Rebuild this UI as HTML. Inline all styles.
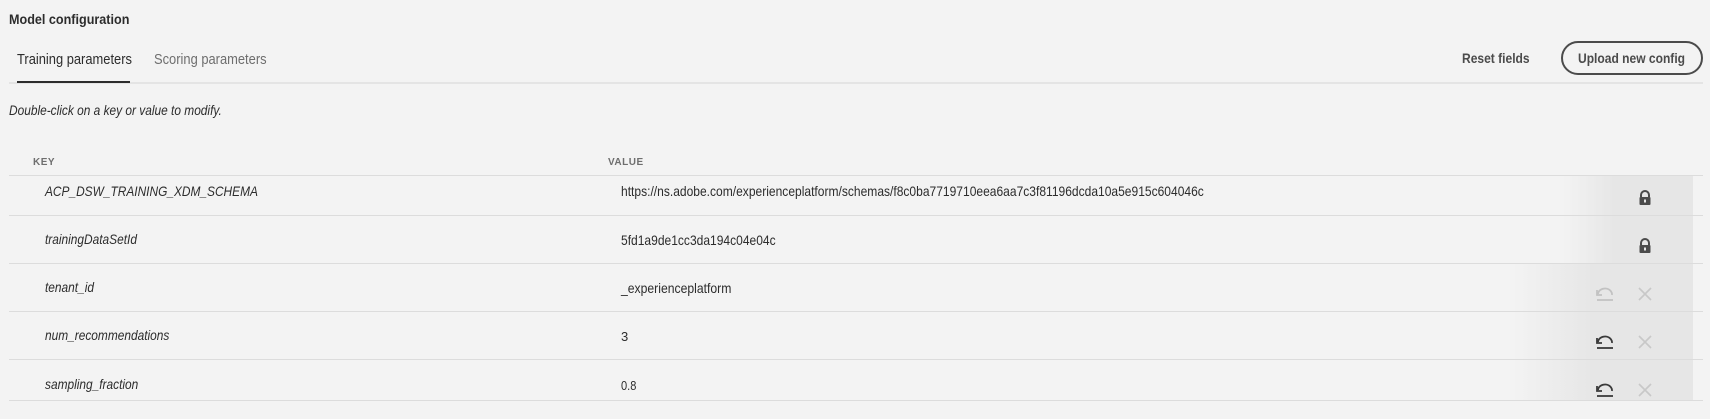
<!DOCTYPE html>
<html><head><style>
*{margin:0;padding:0;box-sizing:border-box}
body{width:1710px;height:419px;background:#f3f3f3;font-family:"Liberation Sans",sans-serif;color:#2c2c2c;position:relative;overflow:hidden}
.a{position:absolute;white-space:nowrap}
.sq{transform:scaleX(0.82);transform-origin:left center;display:inline-block}
.line{position:absolute;left:9px;width:1694px;height:1px;background:#dcdcdc}
.grad{position:absolute;right:17px;width:200px;background:linear-gradient(to right,rgba(230,230,230,0),#e6e6e6 35%)}
.key{position:absolute;left:45px;font-style:italic;font-size:14px;color:#2c2c2c}
.val{position:absolute;left:621px;font-size:14px;color:#2c2c2c}
</style></head><body>
<div class="a" style="left:9px;top:11px;font-size:14px;font-weight:bold"><span class="sq" style="transform:scaleX(0.9)">Model configuration</span></div>
<div class="a" style="left:17px;top:51px;font-size:15px"><span class="sq" style="transform:scaleX(0.86)">Training parameters</span></div>
<div class="a" style="left:154px;top:51px;font-size:15px;color:#6e6e6e"><span class="sq" style="transform:scaleX(0.86)">Scoring parameters</span></div>
<div class="a" style="left:9px;top:82px;width:1694px;height:2px;background:#e4e4e4"></div>
<div class="a" style="left:17px;top:81px;width:113px;height:2px;background:#2c2c2c"></div>
<div class="a" style="left:1462px;top:50px;font-size:14px;font-weight:bold;color:#4b4b4b"><span class="sq" style="transform:scaleX(0.86)">Reset fields</span></div>
<div class="a" style="left:1561px;top:41px;width:142px;height:34px;border:2px solid #4b4b4b;border-radius:17px;font-size:14px;font-weight:bold;color:#4b4b4b;padding:7px 0 0 15px"><span class="sq" style="transform:scaleX(0.86)">Upload new config</span></div>
<div class="a" style="left:9px;top:102px;font-size:14px;font-style:italic"><span class="sq" style="transform:scaleX(0.85)">Double-click on a key or value to modify.</span></div>
<div class="a" style="left:33px;top:157px;font-size:10px;font-weight:bold;color:#6e6e6e;letter-spacing:0.5px">KEY</div>
<div class="a" style="left:608px;top:157px;font-size:10px;font-weight:bold;color:#6e6e6e;letter-spacing:0.5px">VALUE</div>

<div class="grad" style="top:175px;height:88px;width:130px;background:linear-gradient(to right,rgba(230,230,230,0),#e6e6e6 40%)"></div>
<div class="grad" style="top:263px;height:137px;width:180px;background:linear-gradient(to right,rgba(230,230,230,0),#e6e6e6 45%)"></div>

<div class="line" style="top:175px"></div>
<div class="line" style="top:215px"></div>
<div class="line" style="top:263px"></div>
<div class="line" style="top:311px"></div>
<div class="line" style="top:359px"></div>
<div class="line" style="top:400px"></div>

<div class="key" style="top:183px"><span class="sq" style="transform:scaleX(0.85)">ACP_DSW_TRAINING_XDM_SCHEMA</span></div>
<div class="val" style="top:183px"><span class="sq" style="transform:scaleX(0.86)">https://ns.adobe.com/experienceplatform/schemas/f8c0ba7719710eea6aa7c3f81196dcda10a5e915c604046c</span></div>
<div class="key" style="top:231px"><span class="sq" style="transform:scaleX(0.85)">trainingDataSetId</span></div>
<div class="val" style="top:232px"><span class="sq" style="transform:scaleX(0.86)">5fd1a9de1cc3da194c04e04c</span></div>
<div class="key" style="top:279px"><span class="sq" style="transform:scaleX(0.85)">tenant_id</span></div>
<div class="val" style="top:280px"><span class="sq" style="transform:scaleX(0.87)">_experienceplatform</span></div>
<div class="key" style="top:327px"><span class="sq" style="transform:scaleX(0.85)">num_recommendations</span></div>
<div class="val" style="top:329px;font-size:13px">3</div>
<div class="key" style="top:376px"><span class="sq" style="transform:scaleX(0.85)">sampling_fraction</span></div>
<div class="val" style="top:378px;font-size:13px"><span class="sq" style="transform:scaleX(0.85)">0.8</span></div>

<svg class="a" style="left:1637px;top:190px" width="16" height="16" viewBox="0 0 16 16"><path d="M4 7V5a4 4 0 0 1 8 0v2" fill="none" stroke="#4b4b4b" stroke-width="2"/><rect x="2.5" y="7" width="11" height="8" rx="1" fill="#4b4b4b"/><rect x="7" y="9.5" width="2" height="3" fill="#e6e6e6"/></svg>
<svg class="a" style="left:1637px;top:238px" width="16" height="16" viewBox="0 0 16 16"><path d="M4 7V5a4 4 0 0 1 8 0v2" fill="none" stroke="#4b4b4b" stroke-width="2"/><rect x="2.5" y="7" width="11" height="8" rx="1" fill="#4b4b4b"/><rect x="7" y="9.5" width="2" height="3" fill="#e6e6e6"/></svg>

<svg class="a" style="left:1596px;top:286px" width="18" height="16" viewBox="0 0 18 16"><path d="M2 8 A7 6 0 0 1 16 9" fill="none" stroke="#c2c2c2" stroke-width="1.8"/><path d="M1 4v5h5" fill="none" stroke="#c2c2c2" stroke-width="1.8"/><path d="M1 14h16" stroke="#c2c2c2" stroke-width="1.8"/></svg>
<svg class="a" style="left:1638px;top:287px" width="14" height="14" viewBox="0 0 14 14"><path d="M1 1L13 13M13 1L1 13" stroke="#c8c8c8" stroke-width="1.6"/></svg>
<svg class="a" style="left:1596px;top:334px" width="18" height="16" viewBox="0 0 18 16"><path d="M2 8 A7 6 0 0 1 16 9" fill="none" stroke="#3a3a3a" stroke-width="1.8"/><path d="M1 4v5h5" fill="none" stroke="#3a3a3a" stroke-width="1.8"/><path d="M1 14h16" stroke="#3a3a3a" stroke-width="1.8"/></svg>
<svg class="a" style="left:1638px;top:335px" width="14" height="14" viewBox="0 0 14 14"><path d="M1 1L13 13M13 1L1 13" stroke="#c8c8c8" stroke-width="1.6"/></svg>
<svg class="a" style="left:1596px;top:382px" width="18" height="16" viewBox="0 0 18 16"><path d="M2 8 A7 6 0 0 1 16 9" fill="none" stroke="#3a3a3a" stroke-width="1.8"/><path d="M1 4v5h5" fill="none" stroke="#3a3a3a" stroke-width="1.8"/><path d="M1 14h16" stroke="#3a3a3a" stroke-width="1.8"/></svg>
<svg class="a" style="left:1638px;top:383px" width="14" height="14" viewBox="0 0 14 14"><path d="M1 1L13 13M13 1L1 13" stroke="#c8c8c8" stroke-width="1.6"/></svg>
</body></html>
